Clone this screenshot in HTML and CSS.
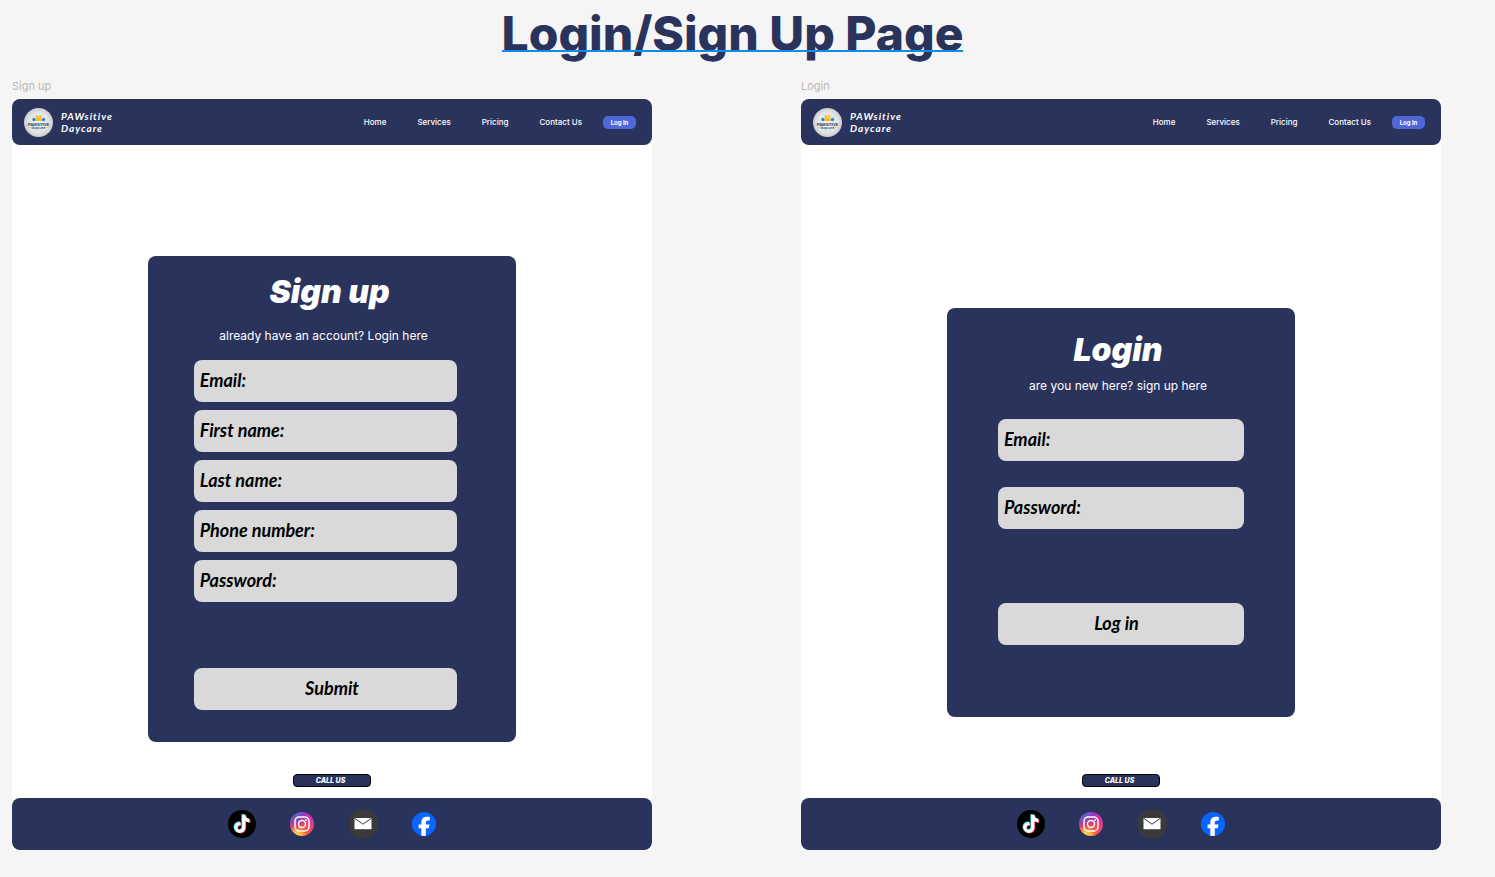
FILE: index.html
```html
<!DOCTYPE html>
<html lang="en">
<head>
<meta charset="utf-8">
<meta name="viewport" content="width=device-width, initial-scale=1">
<title>Login/Sign Up Page</title>
<link rel="stylesheet" href="styles.css">
</head>
<body>
<svg class="sprite" aria-hidden="true">
  <defs>
    <radialGradient id="ig-warm" cx="0.27" cy="1.05" r="1">
      <stop offset="0" stop-color="#ffdd55"/>
      <stop offset="0.2" stop-color="#ffc14a"/>
      <stop offset="0.48" stop-color="#ff543e"/>
      <stop offset="1" stop-color="#c837ab"/>
    </radialGradient>
    <radialGradient id="ig-cool" cx="0.1" cy="0" r="0.75">
      <stop offset="0" stop-color="#3771c8"/>
      <stop offset="0.4" stop-color="#5a5fd0" stop-opacity="0.8"/>
      <stop offset="1" stop-color="#6600ff" stop-opacity="0"/>
    </radialGradient>
    <radialGradient id="logo-disc">
      <stop offset="0" stop-color="#f4f4f4"/>
      <stop offset="0.7" stop-color="#e4e4e4"/>
      <stop offset="1" stop-color="#c9cbd0"/>
    </radialGradient>
    <path id="note" d="M14.200 4.800h3.200c.3 2.400 1.800 4 4.100 4.200v3.200c-1.500 0-2.900-.5-4.100-1.300v6.300c0 3.500-2.600 5.700-5.500 5.700-3.100 0-5.500-2.400-5.500-5.400 0-3.300 2.800-5.700 6.200-5.300v3.200c-1.700-.5-3.100.5-3.100 2.100 0 1.300 1 2.300 2.300 2.300 1.400 0 2.400-1 2.400-2.700z"/>
  </defs>
  <symbol id="tiktok" viewBox="0 0 28 28">
    <circle cx="14" cy="14" r="14" fill="#000"/>
    <use href="#note" x="-.8" y="-.6" fill="#25f4ee"/>
    <use href="#note" x=".8" y=".6" fill="#fe2c55"/>
    <use href="#note" fill="#fff"/>
  </symbol>
  <symbol id="instagram" viewBox="0 0 24 24">
    <circle cx="12" cy="12" r="12" fill="url(#ig-warm)"/>
    <circle cx="12" cy="12" r="12" fill="url(#ig-cool)"/>
    <rect x="5" y="5" width="14" height="14" rx="4.200" fill="none" stroke="#fff" stroke-width="1.400"/>
    <circle cx="12" cy="12" r="3.500" fill="none" stroke="#fff" stroke-width="1.400"/>
    <circle cx="16" cy="8" r=".9" fill="#fff"/>
  </symbol>
  <symbol id="mail" viewBox="0 0 30 30">
    <circle cx="15" cy="15" r="15" fill="#3a3a3a"/>
    <path d="M6.500 9h17v11.200h-17z" fill="#fff"/>
    <path d="M6.500 9.200l8.500 6 8.500-6" fill="none" stroke="#3a3a3a" stroke-width="1"/>
  </symbol>
  <symbol id="facebook" viewBox="0 0 24 24">
    <circle cx="12" cy="12" r="12" fill="#0866ff"/>
    <path d="M9.300 23.700v-7.500H6.600v-3.700h2.700v-1.600c0-4.300 2-6.100 6-6.100.8 0 2 .1 2.500.3v3.500h-1.300c-2 0-2.700.7-2.700 2.500v1.400h3.700l-.7 3.700h-3v7.700z" fill="#fff"/>
  </symbol>
</svg>

<main class="board">
  <h1 class="title"><span class="title-text">Login/Sign Up Page</span></h1>

  <div class="frames">
    <section class="frame">
      <h2 class="frame-label">Sign up</h2>
      <div class="screen">
        <header class="navbar">
          <svg class="logo" viewBox="0 0 29 29" role="img" aria-label="PAWsitive Daycare logo">
            <circle cx="14.500" cy="14.500" r="14.500" fill="url(#logo-disc)"/>
            <circle cx="10" cy="11.500" r="1.700" fill="#2a86c8"/>
            <circle cx="19.500" cy="11.500" r="1.700" fill="#2a86c8"/>
            <circle cx="12.900" cy="8.600" r="1.300" fill="#f6b81c"/>
            <circle cx="16.400" cy="8.600" r="1.300" fill="#f6b81c"/>
            <path d="M11.300 13c0-2.100 1.500-3.400 3.300-3.400s3.300 1.300 3.300 3.400z" fill="#f6b81c"/>
            <text x="14.500" y="17.500" text-anchor="middle" class="logo-name">PAWSITIVE</text>
            <text x="14.500" y="21" text-anchor="middle" class="logo-sub">daycare</text>
            <path d="M4.500 19.500h3M21.500 19.500h3" stroke="#f6b81c" stroke-width=".6"/>
          </svg>
          <p class="brand">PAWsitive<br>Daycare</p>
          <nav class="links">
            <a href="#">Home</a>
            <a href="#">Services</a>
            <a href="#">Pricing</a>
            <a href="#">Contact Us</a>
          </nav>
          <button class="nav-login" type="button">Log In</button>
        </header>
        <form class="card card-signup">
          <h3 class="card-title">Sign up</h3>
          <p class="card-note">already have an account? <a href="#">Login here</a></p>
          <div class="fields">
            <label class="field"><span>Email:</span><input type="email"></label>
            <label class="field"><span>First name:</span><input type="text"></label>
            <label class="field"><span>Last name:</span><input type="text"></label>
            <label class="field"><span>Phone number:</span><input type="tel"></label>
            <label class="field"><span>Password:</span><input type="password"></label>
          </div>
          <button class="submit" type="submit">Submit</button>
        </form>
        <button class="call" type="button">CALL US</button>
        <footer class="social">
          <a href="#" aria-label="TikTok"><svg class="icon icon-tiktok"><use href="#tiktok"/></svg></a>
          <a href="#" aria-label="Instagram"><svg class="icon icon-instagram"><use href="#instagram"/></svg></a>
          <a href="#" aria-label="Email"><svg class="icon icon-mail"><use href="#mail"/></svg></a>
          <a href="#" aria-label="Facebook"><svg class="icon icon-facebook"><use href="#facebook"/></svg></a>
        </footer>
      </div>
    </section>

    <section class="frame">
      <h2 class="frame-label">Login</h2>
      <div class="screen">
        <header class="navbar">
          <svg class="logo" viewBox="0 0 29 29" role="img" aria-label="PAWsitive Daycare logo">
            <circle cx="14.500" cy="14.500" r="14.500" fill="url(#logo-disc)"/>
            <circle cx="10" cy="11.500" r="1.700" fill="#2a86c8"/>
            <circle cx="19.500" cy="11.500" r="1.700" fill="#2a86c8"/>
            <circle cx="12.900" cy="8.600" r="1.300" fill="#f6b81c"/>
            <circle cx="16.400" cy="8.600" r="1.300" fill="#f6b81c"/>
            <path d="M11.300 13c0-2.100 1.500-3.400 3.300-3.400s3.300 1.300 3.300 3.400z" fill="#f6b81c"/>
            <text x="14.500" y="17.500" text-anchor="middle" class="logo-name">PAWSITIVE</text>
            <text x="14.500" y="21" text-anchor="middle" class="logo-sub">daycare</text>
            <path d="M4.500 19.500h3M21.500 19.500h3" stroke="#f6b81c" stroke-width=".6"/>
          </svg>
          <p class="brand">PAWsitive<br>Daycare</p>
          <nav class="links">
            <a href="#">Home</a>
            <a href="#">Services</a>
            <a href="#">Pricing</a>
            <a href="#">Contact Us</a>
          </nav>
          <button class="nav-login" type="button">Log In</button>
        </header>
        <form class="card card-login">
          <h3 class="card-title">Login</h3>
          <p class="card-note">are you new here? <a href="#">sign up here</a></p>
          <div class="fields">
            <label class="field"><span>Email:</span><input type="email"></label>
            <label class="field"><span>Password:</span><input type="password"></label>
          </div>
          <button class="submit" type="submit">Log in</button>
        </form>
        <button class="call" type="button">CALL US</button>
        <footer class="social">
          <a href="#" aria-label="TikTok"><svg class="icon icon-tiktok"><use href="#tiktok"/></svg></a>
          <a href="#" aria-label="Instagram"><svg class="icon icon-instagram"><use href="#instagram"/></svg></a>
          <a href="#" aria-label="Email"><svg class="icon icon-mail"><use href="#mail"/></svg></a>
          <a href="#" aria-label="Facebook"><svg class="icon icon-facebook"><use href="#facebook"/></svg></a>
        </footer>
      </div>
    </section>
  </div>
</main>
</body>
</html>
```

FILE: styles.css
```css
:root {
  --navy: #2a335c;
  --field: #d9d9d9;
  --ui: Inter, "Liberation Sans", sans-serif;
  --hand: Lato, "Liberation Sans", sans-serif;
}

* {
  box-sizing: border-box;
  margin: 0;
}

body {
  background: #f5f5f5;
  font-family: var(--ui);
}

button {
  border: 0;
  padding: 0;
  cursor: pointer;
}

a {
  color: inherit;
  text-decoration: none;
}

.sprite {
  position: absolute;
  width: 0;
  height: 0;
}

.board {
  padding: 4px 54px 27px 12px;
}

/* Page title */
.title {
  padding-left: 12px;
  text-align: center;
  font-size: 48px;
  line-height: 60px;
  font-weight: 800;
  color: var(--navy);
}

.title-text {
  position: relative;
  display: inline-block;
}

.title-text::after {
  content: "";
  position: absolute;
  left: 0;
  right: 0;
  bottom: 12px;
  height: 2px;
  background: #0d8ce9;
}

.frames {
  display: grid;
  grid-template-columns: 1fr 1fr;
  column-gap: 149px;
  padding-top: 14px;
}

.frame {
  display: flex;
  flex-direction: column;
}

.frame-label {
  padding-bottom: 5px;
  font-size: 11px;
  line-height: 16px;
  font-weight: 400;
  color: #b8b8b8;
}

.screen {
  flex: 1;
  display: flex;
  flex-direction: column;
  align-items: center;
  background: #fff;
}

/* Navigation */
.navbar {
  align-self: stretch;
  display: flex;
  align-items: center;
  height: 46px;
  padding: 0 16px 0 12px;
  border-radius: 8px;
  background: var(--navy);
  color: #fff;
}

.logo {
  width: 29px;
  height: 29px;
}

.logo-name {
  font: 900 4px var(--hand);
  fill: #173a63;
}

.logo-sub {
  font: 700 4px var(--hand);
  fill: #2a5f8f;
}

.brand {
  padding-left: 8px;
  font: italic 700 10px/12px var(--hand);
  letter-spacing: 1px;
}

.links {
  display: flex;
  gap: 31px;
  margin-left: auto;
  font-size: 8px;
  line-height: 12px;
  font-weight: 500;
}

.nav-login {
  width: 33px;
  height: 13px;
  margin-left: 21px;
  border-radius: 5px;
  background: #4f67d9;
  color: #fff;
  font: 700 6px/13px var(--ui);
}

/* Form cards */
.card {
  display: flex;
  flex-direction: column;
  border-radius: 8px;
  background: var(--navy);
  color: #fff;
}

.card-signup {
  width: 57.6%;
  margin: 111px 0 32px;
  padding: 16px 59px 32px 46px;
}

.card-login {
  width: 54.4%;
  margin: 163px 0 57px;
  padding: 22px 51px 72px;
}

.card-title {
  text-align: center;
  font-size: 32px;
  line-height: 40px;
  font-weight: 900;
  font-style: italic;
}

.card-note {
  text-align: center;
  font-size: 12px;
  line-height: 16px;
  font-weight: 400;
}

.card-signup .card-title {
  padding-left: 8px;
}

.card-signup .card-note {
  padding: 16px 4px 0 0;
}

.card-login .card-title {
  padding-right: 6px;
}

.card-login .card-note {
  padding: 8px 6px 0 0;
}

.fields {
  display: grid;
  grid-template-columns: minmax(0, 1fr);
  gap: 8px;
  padding: 16px 0 66px;
}

.card-login .fields {
  gap: 26px;
  padding: 25px 0 74px;
}

.field,
.submit {
  height: 42px;
  border-radius: 8px;
  background: var(--field);
  color: #000;
  font: italic 700 18px/40px var(--hand);
}

.submit {
  padding-bottom: 2px;
}

.field {
  display: flex;
  gap: 8px;
  padding: 0 6px;
  white-space: nowrap;
}

.field input {
  flex: 1;
  width: 0;
  min-width: 0;
  height: 42px;
  padding: 0;
  border: 0;
  outline: 0;
  background: transparent;
  font: inherit;
}

.card-signup .submit {
  padding-left: 13px;
}

.card-login .submit {
  padding-right: 9px;
}

/* Bottom of each screen */
.call {
  width: 78px;
  height: 13px;
  margin: auto 0 11px;
  padding-right: 3px;
  border: 1px solid #000;
  border-radius: 4px;
  background: var(--navy);
  color: #fff;
  font: italic 800 7px/11px var(--ui);
}

.social {
  align-self: stretch;
  display: flex;
  align-items: center;
  justify-content: center;
  gap: 34px;
  height: 52px;
  border-radius: 8px;
  background: var(--navy);
}

.icon {
  display: block;
}

.icon-tiktok {
  width: 28px;
  height: 28px;
}

.icon-instagram {
  width: 24px;
  height: 24px;
}

.icon-mail {
  width: 30px;
  height: 30px;
}

.icon-facebook {
  width: 24px;
  height: 24px;
}
```
